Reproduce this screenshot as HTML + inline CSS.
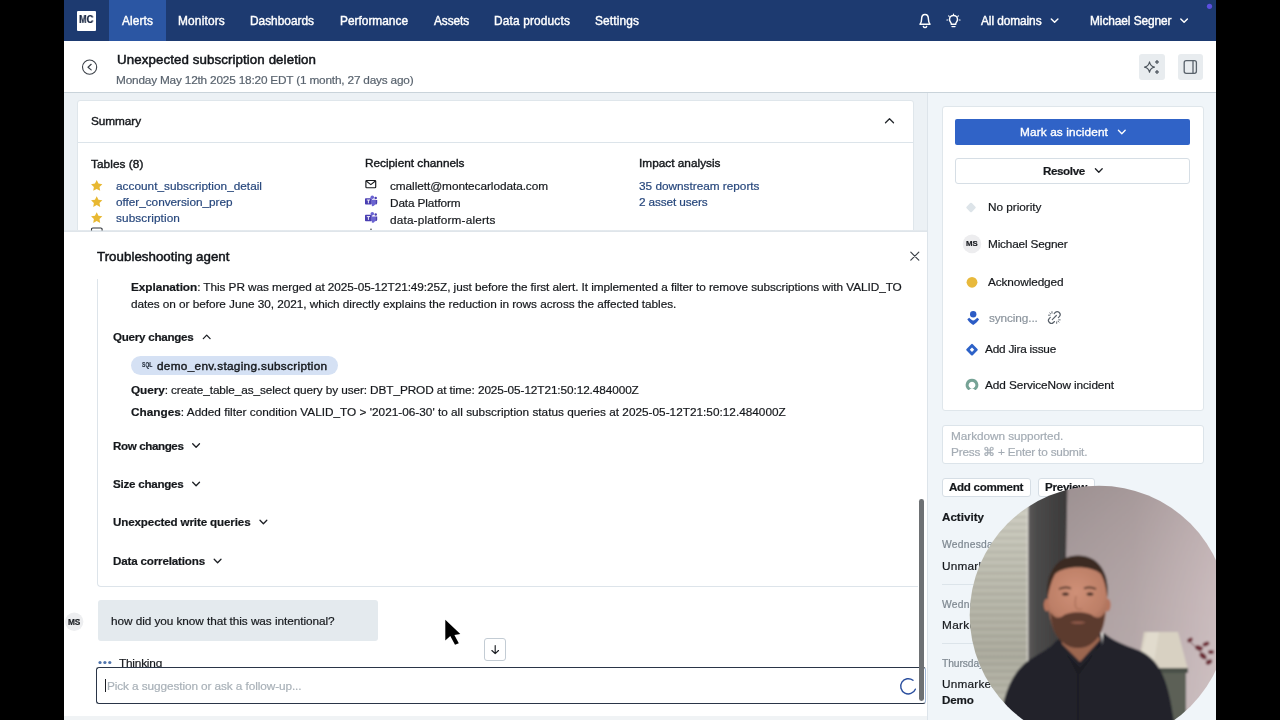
<!DOCTYPE html>
<html>
<head>
<meta charset="utf-8">
<title>Unexpected subscription deletion</title>
<style>
*{box-sizing:border-box;margin:0;padding:0}
html,body{width:1280px;height:720px;overflow:hidden;background:#000}
body{font-family:"Liberation Sans",sans-serif;font-size:12px;color:#15181c;position:relative}
.a{position:absolute}
.t{position:absolute;white-space:nowrap;line-height:1;will-change:transform;-webkit-text-stroke-width:.2px}
svg{position:absolute;overflow:visible}
#app{position:absolute;left:0;top:0;width:1280px;height:720px;background:#ecf1f5;overflow:hidden}
.bar{position:absolute;top:0;width:64px;height:720px;background:#000;z-index:50}
.card{position:absolute;background:#fff;border:1px solid #dfe6eb;border-radius:3px}
.btn{position:absolute;background:#fff;border:1px solid #d6dee5;border-radius:3px}
</style>
</head>
<body>
<div id="app">
<!-- nav -->
<div class="a" style="left:64px;top:0;width:1152px;height:41px;background:#1d3a70"></div>
<div class="a" style="left:109px;top:0;width:57px;height:41px;background:#2b56a3"></div>
<div class="a" style="left:76.5px;top:10.5px;width:19.5px;height:20px;background:#fff;border-radius:1px"></div>
<div class="t" style="left:79px;top:15.300px;font-size:10.300px;font-weight:700;color:#15233f;letter-spacing:-.200px;transform:scaleX(.900);transform-origin:0 0">MC</div>
<!-- header -->
<div class="a" style="left:64px;top:41px;width:1152px;height:51.5px;background:#fff;border-bottom:1.200px solid #c9d3da"></div>
<!-- sidebar bg -->
<div class="a" style="left:927px;top:92.5px;width:289px;height:628px;background:#f0f5f9;border-left:1.300px solid #dde4ea"></div>
<!-- summary card -->
<div class="card" style="left:77px;top:99.5px;width:836.5px;height:140px"></div>
<div class="a" style="left:78px;top:141.5px;width:834.5px;height:1px;background:#dce4ea"></div>
<!-- agent panel -->
<div class="a" style="left:64px;top:229.500px;width:863px;height:2.500px;background:linear-gradient(#e6ebef,#dde3e8)"></div>
<div class="a" style="left:64px;top:231.700px;width:863px;height:484px;background:#fff"></div>
<!-- agent message box -->
<div class="a" style="left:97px;top:279px;width:821px;height:307.5px;border:1px solid #dde4ea;border-top:none;border-radius:0 0 0 4px;border-right:none"></div>
<!-- pill -->
<div class="a" style="left:130.5px;top:356px;width:207.5px;height:19px;border-radius:9.5px;background:#d5e1f4"></div>
<!-- user bubble -->
<div class="a" style="left:97.5px;top:600px;width:280px;height:41px;border-radius:3px;background:#e4eaee"></div>
<!-- input -->
<div class="a" style="left:96px;top:667px;width:830px;height:36.5px;border:1px solid #2a3547;border-right-color:#a3b9d8;border-radius:3px;background:#fff;z-index:5"></div>
<div class="a" style="left:105px;top:679px;width:1.4px;height:12.5px;background:#1a1d22;z-index:6"></div>
<!-- scrollbar -->
<div class="a" style="left:919.300px;top:498.500px;width:4.800px;height:202px;border-radius:2.400px;background:#6e7174;z-index:7"></div>
<!-- scroll button -->
<div class="btn" style="left:484px;top:638px;width:22px;height:22.5px;border-color:#c3ccd4"></div>
<!-- sidebar card -->
<div class="card" style="left:942px;top:106px;width:261.5px;height:304.5px"></div>
<div class="a" style="left:955px;top:119px;width:234.5px;height:25.5px;border-radius:2px;background:#3063c7"></div>
<div class="btn" style="left:955px;top:157.5px;width:234.5px;height:26px"></div>
<div class="btn" style="left:942px;top:424.5px;width:261.5px;height:39.5px;border-color:#dce4ea"></div>
<div class="btn" style="left:942px;top:477.5px;width:89px;height:19px"></div>
<div class="btn" style="left:1038px;top:477.5px;width:56.5px;height:19px"></div>
<!-- activity dividers -->
<div class="a" style="left:942px;top:584px;width:120px;height:1px;background:#dce4ea"></div>
<div class="a" style="left:942px;top:643px;width:120px;height:1px;background:#dce4ea"></div>
<!-- header right buttons -->
<div class="a" style="left:1139px;top:54px;width:26px;height:25.5px;border-radius:3px;background:#e8ecef"></div>
<div class="a" style="left:1177.5px;top:54px;width:25.5px;height:25.5px;border-radius:3px;background:#e8ecef"></div>
<!-- bottom strip -->
<div class="a" style="left:64px;top:715.5px;width:863px;height:5px;background:#f0f3f5"></div>
<!-- icons: one full-page svg in page coordinates -->
<svg class="a" style="left:0;top:0;z-index:8" width="1280" height="720" viewBox="0 0 1280 720" fill="none">
<!-- nav bell -->
<g stroke="#fff" stroke-width="1.450" stroke-linecap="round" stroke-linejoin="round">
<path d="M920 24.3 h10 c-1.2-1.4-1.6-2.6-1.6-5.3 c0-2.7-1.5-4.6-3.4-4.6 s-3.400 1.900-3.400 4.600 c0 2.700-.4 3.900-1.600 5.300z"/>
<path d="M923.400 26.400 a1.700 1.700 0 0 0 3.200 0"/>
<!-- bulb -->
<path d="M951.200 24.200 h4.600 M952 26.600 h3 M951.300 24 c0-1.600-1.800-2.300-1.800-4.600 a4 4 0 0 1 8 0 c0 2.300-1.800 3-1.800 4.600"/>
<path d="M953.500 14 v.8 M948.600 15.800 l.6 .6 M958.400 15.800 l-.6 .6 M946.900 20 h.8 M959.300 20 h.8" stroke-width="1.100"/>
<!-- nav chevrons -->
<path d="M1051.300 19 l3.300 3.300 l3.300-3.300 M1180.800 19 l3.300 3.300 l3.300-3.300"/>
</g>
<circle cx="1209.500" cy="6.300" r="2.600" fill="#5b4fe0"/>
<!-- back -->
<circle cx="89.600" cy="67.100" r="7.100" stroke="#3b4048" stroke-width="1.100"/>
<path d="M91.200 64.300 l-3.200 2.900 l3.200 2.700" stroke="#3b4048" stroke-width="1.200" stroke-linecap="round" stroke-linejoin="round"/>
<!-- sparkle -->
<g stroke="#4c545c" stroke-width="1.100" stroke-linejoin="round">
<path d="M1149.500 61.900 c.6 3.200 1.800 4.500 5 5.200 c-3.200 .7-4.400 2-5 5.200 c-.6-3.200-1.800-4.500-5-5.200 c3.200-.7 4.400-2 5-5.200z"/>
<path d="M1157 60 c.3 1.300 .7 1.700 2 2 c-1.300 .3-1.700 .7-2 2 c-.3-1.300-.7-1.700-2-2 c1.300-.3 1.700-.7 2-2z M1157 70 c.3 1.300 .7 1.700 2 2 c-1.300 .3-1.700 .7-2 2 c-.3-1.300-.7-1.700-2-2 c1.300-.3 1.700-.7 2-2z" fill="#4c545c" stroke-width=".6"/>
</g>
<!-- panel icon -->
<rect x="1184.200" y="60.700" width="12.200" height="12.600" rx="2" stroke="#59626b" stroke-width="1.300"/>
<path d="M1193 60.700 v12.600" stroke="#59626b" stroke-width="1.300"/>
<!-- summary chevron -->
<path d="M885.500 122.800 l4-4 l4 4" stroke="#22262b" stroke-width="1.300" stroke-linecap="round" stroke-linejoin="round"/>
<!-- stars -->
<g fill="#e8b832">
<path d="M96.700 180 l1.750 3.600 l3.900 .550 l-2.850 2.750 l.700 3.900 l-3.500-1.900 l-3.500 1.900 l.700-3.900 l-2.850-2.750 l3.900-.550z"/>
<path transform="translate(0 16.200)" d="M96.700 180 l1.750 3.600 l3.900 .550 l-2.850 2.750 l.700 3.900 l-3.500-1.900 l-3.500 1.900 l.700-3.900 l-2.850-2.750 l3.900-.550z"/>
<path transform="translate(0 32.200)" d="M96.700 180 l1.750 3.600 l3.900 .550 l-2.850 2.750 l.700 3.900 l-3.500-1.900 l-3.500 1.900 l.700-3.900 l-2.850-2.750 l3.900-.550z"/>
</g>
<!-- partial table icon -->
<path d="M91.500 230.500 v-1.200 a1.300 1.300 0 0 1 1.300-1.300 h8 a1.300 1.300 0 0 1 1.300 1.300 v1.200" stroke="#30353b" stroke-width="1.100"/>
<!-- mail -->
<rect x="365.900" y="180.500" width="9.800" height="7.200" rx=".8" stroke="#16181c" stroke-width="1.150"/>
<path d="M366.200 181 l4.600 3.600 l4.600-3.600" stroke="#16181c" stroke-width="1.100" stroke-linejoin="round"/>
<!-- teams -->
<g>
<rect x="365" y="198.200" width="6.800" height="6.400" rx=".8" fill="#4a3fb2"/>
<path d="M371.800 199.800 h3.400 v3.700 a2.600 2.600 0 0 1-3.400 2.500z" fill="#6a63d2"/>
<circle cx="372.300" cy="197.200" r="1.800" fill="#6a63d2"/>
<circle cx="375.700" cy="198" r="1.250" fill="#4a3fb2"/>
<path d="M375.200 199.900 h2 v3 a1.700 1.700 0 0 1-2 1.600z" fill="#4a3fb2"/>
<path d="M366.800 200 h3.200 M368.400 200 v3.300" stroke="#fff" stroke-width=".9"/>
</g>
<g transform="translate(0 16.600)">
<rect x="365" y="198.200" width="6.800" height="6.400" rx=".8" fill="#4a3fb2"/>
<path d="M371.800 199.800 h3.400 v3.700 a2.600 2.600 0 0 1-3.400 2.500z" fill="#6a63d2"/>
<circle cx="372.300" cy="197.200" r="1.800" fill="#6a63d2"/>
<circle cx="375.700" cy="198" r="1.250" fill="#4a3fb2"/>
<path d="M375.200 199.900 h2 v3 a1.700 1.700 0 0 1-2 1.600z" fill="#4a3fb2"/>
<path d="M366.800 200 h3.200 M368.400 200 v3.300" stroke="#fff" stroke-width=".9"/>
</g>
<circle cx="371" cy="229.200" r=".800" fill="#3a3f46"/>
<!-- close X -->
<path d="M910.800 252.200 l8 8 M918.800 252.200 l-8 8" stroke="#3a3f46" stroke-width="1.150" stroke-linecap="round"/>
<!-- agent chevrons -->
<g stroke="#1c1f24" stroke-width="1.300" stroke-linecap="round" stroke-linejoin="round">
<path d="M203.300 338.600 l3.400-3.500 l3.400 3.500"/>
<path d="M192.700 443.700 l3.400 3.500 l3.400-3.500"/>
<path d="M192.700 482.200 l3.400 3.500 l3.400-3.500"/>
<path d="M260 520.200 l3.400 3.500 l3.400-3.500"/>
<path d="M214.200 559.200 l3.400 3.500 l3.400-3.500"/>
<path d="M1095.400 168.800 l3.400 3.500 l3.400-3.500"/>
</g>
<path d="M1118.400 130.300 l3.400 3.500 l3.400-3.500" stroke="#fff" stroke-width="1.300" stroke-linecap="round" stroke-linejoin="round"/>
<!-- left MS avatar -->
<circle cx="74.200" cy="621.800" r="9.200" fill="#edeef0"/>
<!-- thinking dots -->
<g fill="#4f74ad"><circle cx="100" cy="662.500" r="1.600"/><circle cx="104.900" cy="662.500" r="1.600"/><circle cx="109.800" cy="662.500" r="1.600"/></g>
<!-- scroll arrow -->
<path d="M495.200 645.600 v8 M491.900 650.500 l3.300 3.200 l3.300-3.200" stroke="#1c1f24" stroke-width="1.150" stroke-linecap="round" stroke-linejoin="round"/>
<!-- spinner -->
<path d="M912.980 680.310 A7.600 7.600 0 1 0 915.350 689.150" stroke="#2b4f9e" stroke-width="1.400" stroke-linecap="round"/>
<!-- priority diamond -->
<rect x="967.300" y="203.800" width="7.400" height="7.400" rx="1.200" transform="rotate(45 971 207.500)" fill="#dde4e9"/>
<!-- MS avatar -->
<circle cx="972" cy="243.900" r="9.300" fill="#ededef"/>
<!-- ack -->
<circle cx="972" cy="282.300" r="5.400" fill="#e8b93c"/>
<!-- opsgenie -->
<circle cx="973.200" cy="314.200" r="3.200" fill="#2c5cc5"/>
<path d="M967.300 319.200 l1.900-1.500 c1.400 1.600 2.600 2.400 4 2.900 c1.400-.5 2.600-1.300 4-2.900 l1.900 1.500 c-1.500 2.300-3.400 4.200-5.900 5.700 c-2.500-1.500-4.400-3.400-5.900-5.700z" fill="#2c5cc5"/>
<!-- unlink -->
<g transform="translate(1047.300 310.500) scale(.585)" stroke="#59616a" stroke-width="1.950" stroke-linecap="round" stroke-linejoin="round">
<path d="M18.840 12.250 l1.720-1.710 h-.02 a5 5 0 0 0-.12-7.070 a5 5 0 0 0-6.950 0 l-1.720 1.710"/>
<path d="M5.170 11.750 l-1.710 1.710 a5 5 0 0 0 .12 7.070 a5 5 0 0 0 6.950 0 l1.710-1.710"/>
<path d="M8.500 15.500 l7-7"/>
<path d="M8 2 v2.600 M2 8 h2.600 M16 19.400 v2.600 M19.400 16 h2.600 M4.200 4.200 l1.600 1.600 M18.200 18.200 l1.600 1.600" stroke-width="1.600"/>
</g>
<!-- jira -->
<rect x="967.600" y="345.300" width="8.800" height="8.800" rx="1.100" transform="rotate(45 972 349.700)" fill="#2d62c8"/>
<rect x="970.450" y="348.150" width="3.100" height="3.100" transform="rotate(45 972 349.700)" fill="#fff"/>
<!-- servicenow -->
<path d="M972 378.700 a6.300 6.300 0 0 1 4.100 11.100 a1 1 0 0 1-1.300 0 a4.300 4.300 0 0 0-5.600 0 a1 1 0 0 1-1.300 0 a6.300 6.300 0 0 1 4.100-11.100z M972 381.700 a3.400 3.400 0 1 0 .01 0z" fill="#76a396" fill-rule="evenodd"/>
<!-- mouse cursor -->
<g>
<path d="M445.300 619.800 v20.600 l5-4.300 l4.700 8.700 l3.800-1.600 l-4.400-8.200 l5.900-1z" fill="#000" stroke="#fff" stroke-width="1.500" stroke-linejoin="round" paint-order="stroke"/>
</g>
</svg>
<!-- small label texts -->
<div class="t" style="left:141.700px;top:361.400px;font-size:8.100px;font-weight:700;color:#1f2937;z-index:9;transform:scaleX(.62);transform-origin:0 0">SQL</div>
<div class="t" style="left:67.700px;top:617.900px;font-size:8.300px;font-weight:700;letter-spacing:-.1px;color:#1a1d22;z-index:9">MS</div>
<div class="t" style="left:965.700px;top:240.300px;font-size:7.800px;font-weight:700;letter-spacing:-.1px;color:#1a1d22;z-index:9">MS</div>

<!-- text -->
<div class="t" style="left:122.00px;top:16.00px;font-size:11.9px;letter-spacing:0.099px;color:#ffffff;-webkit-text-stroke:.4px #fff">Alerts</div>
<div class="t" style="left:178.00px;top:16.00px;font-size:11.9px;letter-spacing:0.174px;color:#ffffff;-webkit-text-stroke:.4px #fff">Monitors</div>
<div class="t" style="left:250.00px;top:16.00px;font-size:11.9px;letter-spacing:-0.013px;color:#ffffff;-webkit-text-stroke:.4px #fff">Dashboards</div>
<div class="t" style="left:340.00px;top:16.00px;font-size:11.9px;letter-spacing:-0.007px;color:#ffffff;-webkit-text-stroke:.4px #fff">Performance</div>
<div class="t" style="left:434.00px;top:16.00px;font-size:11.9px;letter-spacing:-0.115px;color:#ffffff;-webkit-text-stroke:.4px #fff">Assets</div>
<div class="t" style="left:494.00px;top:16.00px;font-size:11.9px;letter-spacing:0.151px;color:#ffffff;-webkit-text-stroke:.4px #fff">Data products</div>
<div class="t" style="left:595.00px;top:16.00px;font-size:11.9px;letter-spacing:0.129px;color:#ffffff;-webkit-text-stroke:.4px #fff">Settings</div>
<div class="t" style="left:980.50px;top:16.00px;font-size:11.9px;letter-spacing:-0.088px;color:#ffffff;-webkit-text-stroke:.4px #fff">All domains</div>
<div class="t" style="left:1089.50px;top:16.00px;font-size:11.9px;letter-spacing:-0.080px;color:#ffffff;-webkit-text-stroke:.4px #fff">Michael Segner</div>
<div class="t" style="left:116.50px;top:52.75px;font-size:13.3px;letter-spacing:0.097px;color:#12151a;-webkit-text-stroke:.5px #12151a">Unexpected subscription deletion</div>
<div class="t" style="left:115.50px;top:74.90px;font-size:11.8px;letter-spacing:-0.186px;color:#59636e;">Monday May 12th 2025 18:20 EDT (1 month, 27 days ago)</div>
<div class="t" style="left:90.50px;top:116.00px;font-size:11.8px;letter-spacing:-0.069px;color:#15181c;-webkit-text-stroke:.4px #15181c">Summary</div>
<div class="t" style="left:90.50px;top:158.50px;font-size:11.8px;letter-spacing:0.070px;color:#15181c;-webkit-text-stroke:.4px #15181c">Tables (8)</div>
<div class="t" style="left:364.50px;top:158.30px;font-size:11.8px;letter-spacing:-0.010px;color:#15181c;-webkit-text-stroke:.4px #15181c">Recipient channels</div>
<div class="t" style="left:638.50px;top:158.30px;font-size:11.8px;letter-spacing:0.013px;color:#15181c;-webkit-text-stroke:.4px #15181c">Impact analysis</div>
<div class="t" style="left:116.00px;top:180.50px;font-size:11.8px;letter-spacing:0.015px;color:#27477c;">account_subscription_detail</div>
<div class="t" style="left:116.00px;top:196.50px;font-size:11.8px;letter-spacing:-0.033px;color:#27477c;">offer_conversion_prep</div>
<div class="t" style="left:116.00px;top:212.50px;font-size:11.8px;letter-spacing:0.087px;color:#27477c;">subscription</div>
<div class="t" style="left:390.00px;top:181.00px;font-size:11.8px;letter-spacing:-0.056px;color:#15181c;">cmallett@montecarlodata.com</div>
<div class="t" style="left:390.00px;top:198.00px;font-size:11.8px;letter-spacing:-0.125px;color:#15181c;">Data Platform</div>
<div class="t" style="left:390.00px;top:214.80px;font-size:11.8px;letter-spacing:0.161px;color:#15181c;">data-platform-alerts</div>
<div class="t" style="left:638.50px;top:180.50px;font-size:11.8px;letter-spacing:-0.007px;color:#27477c;">35 downstream reports</div>
<div class="t" style="left:638.50px;top:196.50px;font-size:11.8px;letter-spacing:-0.129px;color:#27477c;">2 asset users</div>
<div class="t" style="left:97.00px;top:249.75px;font-size:13.3px;letter-spacing:0.031px;color:#12151a;-webkit-text-stroke:.5px #12151a">Troubleshooting agent</div>
<div class="t" style="left:130.75px;top:282.00px;font-size:11.8px;letter-spacing:-0.065px;color:#15181c;"><b>Explanation</b>: This PR was merged at 2025-05-12T21:49:25Z, just before the first alert. It implemented a filter to remove subscriptions with VALID_TO</div>
<div class="t" style="left:130.75px;top:298.50px;font-size:11.8px;letter-spacing:-0.050px;color:#15181c;">dates on or before June 30, 2021, which directly explains the reduction in rows across the affected tables.</div>
<div class="t" style="left:112.50px;top:331.00px;font-size:11.6px;letter-spacing:-0.252px;color:#15181c;font-weight:700;">Query changes</div>
<div class="t" style="left:157.00px;top:360.80px;font-size:11.8px;letter-spacing:0.301px;color:#15181c;-webkit-text-stroke:.4px #15181c">demo_env.staging.subscription</div>
<div class="t" style="left:130.75px;top:384.75px;font-size:11.8px;letter-spacing:-0.093px;color:#15181c;"><b>Query</b>: create_table_as_select query by user: DBT_PROD at time: 2025-05-12T21:50:12.484000Z</div>
<div class="t" style="left:130.75px;top:407.00px;font-size:11.8px;letter-spacing:0.004px;color:#15181c;"><b>Changes</b>: Added filter condition VALID_TO &gt; '2021-06-30' to all subscription status queries at 2025-05-12T21:50:12.484000Z</div>
<div class="t" style="left:112.50px;top:439.50px;font-size:11.6px;letter-spacing:-0.385px;color:#15181c;font-weight:700;">Row changes</div>
<div class="t" style="left:112.50px;top:478.00px;font-size:11.6px;letter-spacing:-0.247px;color:#15181c;font-weight:700;">Size changes</div>
<div class="t" style="left:112.50px;top:516.00px;font-size:11.6px;letter-spacing:-0.124px;color:#15181c;font-weight:700;">Unexpected write queries</div>
<div class="t" style="left:112.50px;top:555.00px;font-size:11.6px;letter-spacing:-0.160px;color:#15181c;font-weight:700;">Data correlations</div>
<div class="t" style="left:110.50px;top:616.00px;font-size:11.8px;letter-spacing:-0.064px;color:#15181c;">how did you know that this was intentional?</div>
<div class="t" style="left:119.00px;top:658.00px;font-size:11.8px;letter-spacing:-0.199px;color:#15181c;-webkit-text-stroke:.2px #15181c;z-index:1">Thinking</div>
<div class="t" style="left:106.50px;top:680.80px;font-size:11.8px;letter-spacing:-0.091px;color:#a9b1b8;z-index:6">Pick a suggestion or ask a follow-up...</div>
<div class="t" style="left:1020.00px;top:127.25px;font-size:11.8px;letter-spacing:0.132px;color:#ffffff;-webkit-text-stroke:.35px #fff">Mark as incident</div>
<div class="t" style="left:1043.25px;top:164.50px;font-size:11.6px;letter-spacing:-0.388px;color:#15181c;font-weight:700;">Resolve</div>
<div class="t" style="left:987.50px;top:202.00px;font-size:11.8px;letter-spacing:-0.024px;color:#15181c;">No priority</div>
<div class="t" style="left:988.00px;top:239.00px;font-size:11.8px;letter-spacing:-0.176px;color:#15181c;">Michael Segner</div>
<div class="t" style="left:988.00px;top:277.25px;font-size:11.8px;letter-spacing:-0.103px;color:#15181c;">Acknowledged</div>
<div class="t" style="left:988.75px;top:312.75px;font-size:11.8px;letter-spacing:-0.109px;color:#8a939c;">syncing...</div>
<div class="t" style="left:985.00px;top:344.25px;font-size:11.8px;letter-spacing:-0.221px;color:#15181c;">Add Jira issue</div>
<div class="t" style="left:985.00px;top:379.75px;font-size:11.8px;letter-spacing:-0.094px;color:#15181c;">Add ServiceNow incident</div>
<div class="t" style="left:950.75px;top:431.00px;font-size:11.8px;letter-spacing:-0.063px;color:#a4acb4;">Markdown supported.</div>
<div class="t" style="left:950.75px;top:447.25px;font-size:11.8px;letter-spacing:-0.202px;color:#a4acb4;">Press &#8984; + Enter to submit.</div>
<div class="t" style="left:949.25px;top:480.75px;font-size:11.6px;letter-spacing:-0.300px;color:#15181c;font-weight:700;">Add comment</div>
<div class="t" style="left:1045.00px;top:480.75px;font-size:11.6px;letter-spacing:-0.261px;color:#15181c;font-weight:700;">Preview</div>
<div class="t" style="left:942.00px;top:511.00px;font-size:11.6px;letter-spacing:0.014px;color:#15181c;font-weight:700;">Activity</div>
<div class="t" style="left:941.70px;top:539.70px;font-size:10.3px;letter-spacing:0.252px;color:#7d8790;">Wednesday, May 28th</div>
<div class="t" style="left:941.70px;top:561.00px;font-size:11.8px;letter-spacing:0.210px;color:#15181c;">Unmarked as incident</div>
<div class="t" style="left:941.70px;top:599.70px;font-size:10.3px;letter-spacing:0.252px;color:#7d8790;">Wednesday, May 28th</div>
<div class="t" style="left:941.70px;top:620.00px;font-size:11.8px;letter-spacing:0.349px;color:#15181c;">Marked as incident</div>
<div class="t" style="left:941.70px;top:658.70px;font-size:10.3px;letter-spacing:-0.107px;color:#7d8790;">Thursday, May 15th</div>
<div class="t" style="left:941.70px;top:679.30px;font-size:11.8px;letter-spacing:0.210px;color:#15181c;">Unmarked as incident</div>
<div class="t" style="left:941.70px;top:694.00px;font-size:11.6px;letter-spacing:-0.105px;color:#15181c;font-weight:700;">Demo</div>
<!-- webcam -->
<svg class="a" style="left:0;top:0;z-index:20" width="1280" height="720" viewBox="0 0 1280 720">
<defs>
<clipPath id="vc"><circle cx="1099" cy="615" r="129.300"/></clipPath>
<linearGradient id="wl" x1="1066" y1="0" x2="1216" y2="0" gradientUnits="userSpaceOnUse"><stop offset="0" stop-color="#a79a9b"/><stop offset=".45" stop-color="#b0a2a3"/><stop offset="1" stop-color="#c8b8ba"/></linearGradient>
<linearGradient id="wv" x1="0" y1="486" x2="0" y2="720" gradientUnits="userSpaceOnUse"><stop offset="0" stop-color="#000" stop-opacity=".06"/><stop offset=".5" stop-color="#fff" stop-opacity=".04"/><stop offset="1" stop-color="#fff" stop-opacity=".12"/></linearGradient>
<linearGradient id="bk" x1="0" y1="500" x2="0" y2="720" gradientUnits="userSpaceOnUse"><stop offset="0" stop-color="#cfcec2"/><stop offset=".35" stop-color="#bab9ac"/><stop offset=".7" stop-color="#aaa99c"/><stop offset="1" stop-color="#b9b8ab"/></linearGradient>
<linearGradient id="ct" x1="1028" y1="0" x2="1068" y2="0" gradientUnits="userSpaceOnUse"><stop offset="0" stop-color="#5a5958"/><stop offset=".25" stop-color="#4a4949"/><stop offset=".6" stop-color="#434242"/><stop offset="1" stop-color="#3a3939"/></linearGradient>
<radialGradient id="fc" cx="1076" cy="592" r="40" gradientUnits="userSpaceOnUse"><stop offset="0" stop-color="#cf9077"/><stop offset=".7" stop-color="#bd7f67"/><stop offset="1" stop-color="#a06a55"/></radialGradient>
<pattern id="br" x="0" y="0" width="40" height="7" patternUnits="userSpaceOnUse"><rect width="40" height="7" fill="none"/><rect y="5.600" width="40" height="1.100" fill="#8f8e82" opacity=".35"/><rect y="2" width="40" height=".8" fill="#e0dfd2" opacity=".25"/></pattern>
<filter id="sf" x="-5%" y="-5%" width="110%" height="110%"><feGaussianBlur stdDeviation=".9"/></filter>
</defs>
<g clip-path="url(#vc)"><g filter="url(#sf)">
<rect x="960" y="480" width="270" height="240" fill="url(#wl)"/>
<rect x="1060" y="480" width="170" height="240" fill="url(#wv)"/>
<!-- brick wall / window -->
<rect x="960" y="480" width="68" height="240" fill="url(#bk)"/>
<rect x="960" y="480" width="68" height="240" fill="url(#br)"/>
<rect x="1026.800" y="480" width="1.600" height="240" fill="#e8e6e0" opacity=".7"/>
<!-- curtain -->
<path d="M1028.400 480 H1067.500 L1066 560 L1058 720 H1028.400z" fill="url(#ct)"/>
<!-- lamp -->
<path d="M1144 632 h34 l9.500 36 h-50z" fill="#d8d1c2"/>
<path d="M1147 632 h12 l-6 36 h-15z" fill="#e6e0d2" opacity=".7"/>
<rect x="1160" y="668" width="26" height="60" rx="4" fill="#5c6157"/>
<rect x="1158" y="668" width="30" height="5" fill="#4a4f47"/>
<!-- plant -->
<g fill="#6e2a34"><ellipse cx="1190" cy="640" rx="3" ry="2" transform="rotate(-30 1190 640)"/><ellipse cx="1199" cy="648" rx="4" ry="2.500" transform="rotate(20 1199 648)"/><ellipse cx="1206" cy="644" rx="3.500" ry="2.200" transform="rotate(-20 1206 644)"/><ellipse cx="1203" cy="656" rx="4" ry="2.500" transform="rotate(40 1203 656)"/><ellipse cx="1211" cy="652" rx="3" ry="2"/><ellipse cx="1209" cy="662" rx="3.500" ry="2.200" transform="rotate(-30 1209 662)"/></g>
<path d="M1188 640 q10 8 22 24" stroke="#5a2a30" stroke-width=".8" fill="none"/>
<!-- body -->
<path d="M1000 722 C1004 690 1014 668 1034 657 C1046 650 1052 646 1056 641 L1064 636 H1092 L1104 633 C1112 640 1124 645 1138 650 C1158 658 1168 676 1174 722z" fill="#23242c"/>
<path d="M1056 641 L1070 660 L1078 676 L1090 660 L1104 634 L1100 646 L1080 668 L1062 650z" fill="#1a1b22"/>
<path d="M1101 633.500 l2.400-1.500 l-1.400 13z" fill="#e8e4e0"/>
<path d="M1078 676 v46" stroke="#15161b" stroke-width="1.200"/>
<!-- neck -->
<path d="M1060 630 h38 l2 10 l-20 22 l-18-18z" fill="#9c6650"/>
<!-- ears -->
<ellipse cx="1047" cy="605" rx="3.200" ry="6.500" fill="#b5745d"/><ellipse cx="1107.500" cy="605" rx="3.200" ry="6.500" fill="#b5745d"/>
<!-- head -->
<path d="M1048 596 C1047 570 1060 557 1078 557 C1096 557 1108 570 1107 596 C1107 620 1102 636 1092 643 C1084 649 1072 649 1064 643 C1054 636 1048 620 1048 596z" fill="url(#fc)"/>
<!-- hair -->
<path d="M1047.500 598 C1045 572 1058 555.500 1078 555.500 C1098 555.500 1110 572 1107.500 598 C1106.500 590 1105 581 1101 574 C1092 565 1064 565 1055 574 C1051 581 1049 590 1047.500 598z" fill="#3b2a23"/>
<!-- beard -->
<path d="M1050.500 612 C1054 618 1058 619 1063 616 C1069 611 1087 611 1093 616 C1098 619 1102 618 1105 612 C1104.500 626 1101 637 1092 643.500 C1084 649.500 1072 649.500 1064 643.500 C1055 637 1051 626 1050.500 612z" fill="#5c3a2d"/>
<path d="M1070 622.500 q8-2.600 16 0 q-8 3.200-16 0z" fill="#8f5a4a"/>
<!-- eyes/brows -->
<path d="M1059 589 q6-3 12-.5 M1084 588.500 q6-2.500 12 .5" stroke="#4a3026" stroke-width="1.600" fill="none"/>
<ellipse cx="1065.500" cy="594" rx="3.400" ry="1.600" fill="#3a2620"/><ellipse cx="1090" cy="594" rx="3.400" ry="1.600" fill="#3a2620"/>
<path d="M1076 596 q-2 10 1 13 q3 1 5 0" stroke="#a96e58" stroke-width="1.200" fill="none"/>
</g></g>
</svg>
<div class="bar" style="left:0"></div>
<div class="bar" style="left:1216px"></div>

</div>
</body>
</html>
